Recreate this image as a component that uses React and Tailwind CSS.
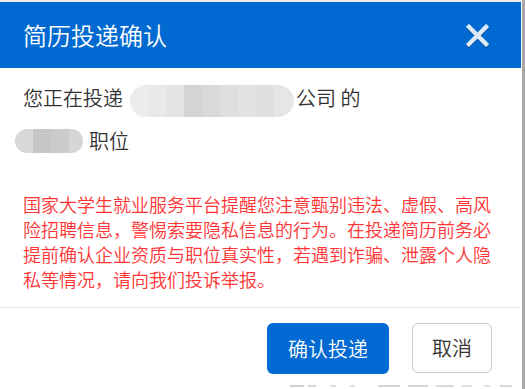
import React from 'react';

const font = { fontFamily: '"Noto Sans CJK SC", "Noto Sans", sans-serif' };

const Blur = ({ cells, height }) => (
  <span className="inline-flex align-middle overflow-hidden rounded-full" style={{ height }}>
    {cells.map((c, i) => (
      <span key={i} className="block h-full" style={{ width: c[0], backgroundColor: c[1] }} />
    ))}
  </span>
);

// fragments of the page behind the dialog, only their tops show
const fragments = [
  [290, 14, '#cfcfcf'], [308, 8, '#d8d8d8'], [330, 6, '#dcdcdc'], [350, 5, '#e0e0e0'],
  [378, 22, '#d4d4d4'], [408, 20, '#d6d6d6'], [436, 18, '#d9d9d9'], [462, 10, '#dedede'],
  [484, 6, '#e2e2e2'], [500, 12, '#d8d8d8'],
];

const App = () => {
  return (
    <div className="w-[525px] h-[389px] overflow-hidden bg-white flex" style={font}>
      <div className="w-[521px] flex flex-col">
        <div className="h-[2px] bg-[#ececec]" />
        <div className="h-[68px] bg-[#0169d2] flex items-center justify-between pl-[23px] pr-[32px]">
          <h2 className="text-[24px] text-white leading-none font-[350]">简历投递确认</h2>
          <svg width="23" height="23" viewBox="0 0 24 24" className="drop-shadow-[0_1px_0_rgba(0,0,0,0.35)]">
            <path d="M3 3 L21 21 M21 3 L3 21" stroke="#dde9f6" strokeWidth="4.5" strokeLinecap="square" />
          </svg>
        </div>

        <div className="pl-[23px] pr-[23px] pt-[8px] pb-[15px]">
          <p className="text-[20px] leading-[43px] text-[#333] flex items-center font-[350]">
            <span>您正在投递</span>
            <span className="ml-[7px] mr-[2px]">
              <Blur
                height={32}
                cells={[
                  [18, '#ececec'], [18, '#e9e9e9'], [18, '#e4e4e4'], [18, '#d4d4d4'],
                  [18, '#d9d9d9'], [18, '#dedede'], [18, '#e2e2e2'], [18, '#e0e0e0'], [20, '#e6e6e6'],
                ]}
              />
            </span>
            <span>公司 的</span>
          </p>
          <p className="text-[20px] leading-[43px] text-[#333] flex items-center -ml-[8px] font-[350]">
            <Blur
              height={24}
              cells={[[18, '#d8d8d8'], [18, '#c6c6c6'], [18, '#cbcbcb'], [14, '#d6d6d6']]}
            />
            <span className="ml-[6px]">职位</span>
          </p>
          <p className="mt-[30px] text-[18px] leading-[25px] text-[#ff3434] font-[350]">
            国家大学生就业服务平台提醒您注意甄别违法、虚假、高风险招聘信息，警惕索要隐私信息的行为。在投递简历前务必提前确认企业资质与职位真实性，若遇到诈骗、泄露个人隐私等情况，请向我们投诉举报。
          </p>
        </div>

        <div className="border-t border-[#e5e5e5] flex justify-end gap-[23px] pt-[15px] pr-[29px]">
          <button className="w-[122px] h-[51px] rounded-[6px] bg-[#0169d2] text-white text-[20px] font-[350]">
            确认投递
          </button>
          <button className="w-[80px] h-[50px] rounded-[6px] border border-[#cccccc] bg-white text-[#333] text-[20px] font-[350]">
            取消
          </button>
        </div>
        <div className="mt-[11px] relative h-[4px]">
          {fragments.map((f, i) => (
            <span
              key={i}
              className="absolute top-0 h-[2px]"
              style={{ left: f[0], width: f[1], backgroundColor: f[2] }}
            />
          ))}
        </div>
      </div>
      <div className="w-[1px]" />
      <div className="w-[3px] bg-[#a8a8a8]" />
    </div>
  );
};

export default App;
